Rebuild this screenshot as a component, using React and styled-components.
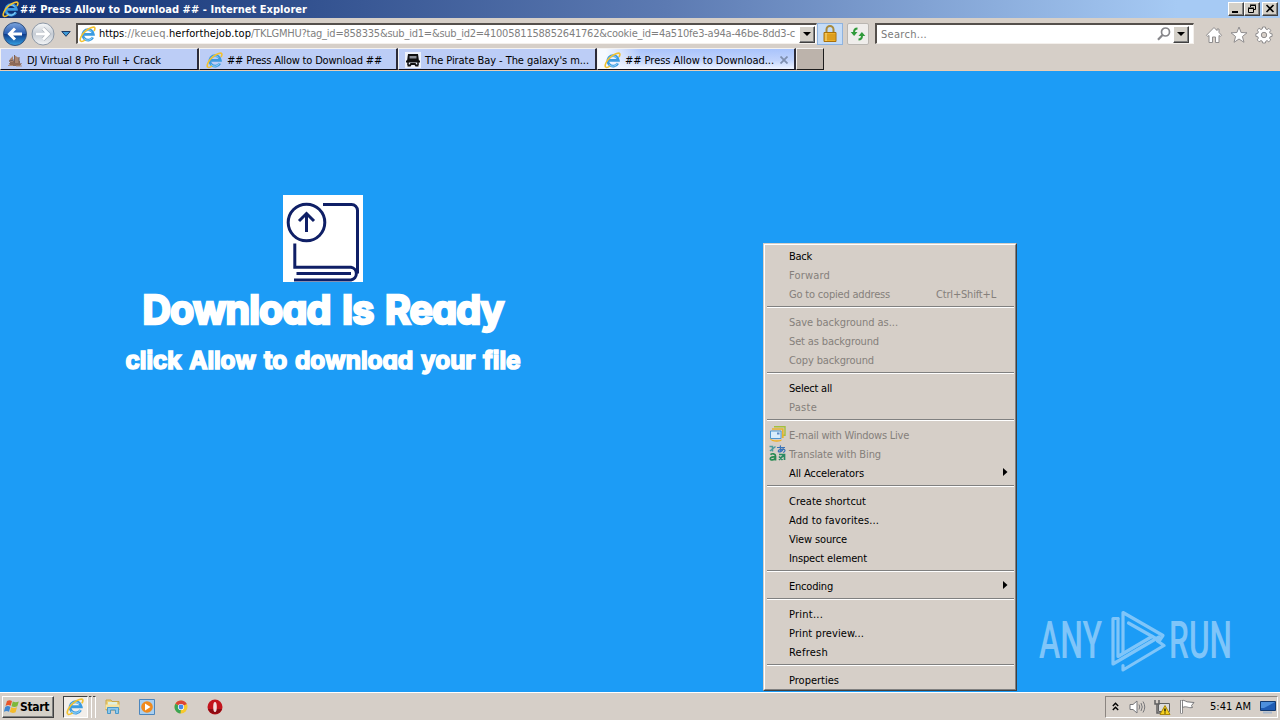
import React, { useLayoutEffect, useRef, useState } from "react";
import styled, { createGlobalStyle, css } from "styled-components";

const GlobalStyle = createGlobalStyle`
  *,
  *::before {
    box-sizing: border-box;
  }

  body {
    margin: 0;
    overflow: hidden;
    font-family: "DejaVu Sans Condensed", "DejaVu Sans", sans-serif;
    font-stretch: condensed;
    font-size: 11px;
    color: #000;
  }

  svg {
    display: block;
    flex-shrink: 0;
  }
`;

const raised = css`
  border: 1px solid;
  border-color: #fff #404040 #404040 #fff;
  box-shadow: inset -1px -1px 0 #808080;
  background: #d4d0c8;
`;

const Screen = styled.div`
  position: relative;
  display: flex;
  flex-direction: column;
  width: 1280px;
  height: 720px;
  overflow: hidden;
  background: #d6cfc8;
`;

/* ---------- text ---------- */

const TextBox = styled.span`
  display: block;
  flex-shrink: 0;
  white-space: pre;
  text-align: left;
`;

const TextRun = styled.span`
  display: inline-block;
  transform-origin: 0 50%;
`;

// Spreads (or squeezes) a label so that it takes exactly the given width
const FitText = ({ width, squeeze = false, className, children }) => {
  const ref = useRef(null);
  const [fit, setFit] = useState({});

  useLayoutEffect(() => {
    const natural = ref.current.getBoundingClientRect().width;
    if (squeeze) {
      setFit({ transform: `scaleX(${width / natural})` });
    } else {
      const count = ref.current.textContent.length;
      setFit({ letterSpacing: (width - natural) / count });
    }
  }, []);

  return (
    <TextBox className={className} style={{ width }}>
      <TextRun ref={ref} style={fit}>
        {children}
      </TextRun>
    </TextBox>
  );
};

/* ---------- icons ---------- */

const IeIcon = ({ size = 17 }) => (
  <svg width={size} height={size} viewBox="0 0 17 17" fill="none">
    <path
      d="M13.8 11.4a5.3 5.3 0 1 1 .6-3.1H5.2"
      stroke="#3b9be0"
      strokeWidth="2.700"
    />
    <path d="M13.4 10.9a4.9 4.9 0 0 1-8.500 1.500M4.500 6.500a5 5 0 0 1 8-1" stroke="#8fd2f8" strokeWidth="1" />
    <path
      d="M1.6 15.2C.2 13.400 2.700 8 7 4.600 11 1.300 15.200.400 15.800 1.800c.400 1-.200 2.200-.900 3.200"
      stroke="#f2c230"
      strokeWidth="1.6"
    />
    <path d="M1.600 15.200c1 .800 3-.100 4.600-1.200" stroke="#f2c230" strokeWidth="1.500" />
  </svg>
);

const ShipIcon = () => (
  <svg width="16" height="16" viewBox="0 0 16 16">
    <path d="M2 11l1 3h10l2-3-2 .500V9H3v2z" fill="#8d6a58" />
    <path d="M3 7l3-3v6H2zM7 3l5 3v5H7z" fill="#a98672" />
    <path d="M7.500 3v8M12 5v6M2 9l5-1" stroke="#77605a" />
    <path d="M1 13.500h5M9 14h6" stroke="#b0907c" />
  </svg>
);

const CassetteIcon = () => (
  <svg width="16" height="16" viewBox="0 0 16 16">
    <path d="M0 0h16v16H0z" fill="#eef2fb" />
    <path d="M3 2h10l1 7H2z" fill="#111" />
    <path d="M4.500 4h7v2.500h-7z" fill="#8b8f96" />
    <path d="M1 9.500h14M2.500 13.500h2.500l1-1.500h4l1 1.500h2.500" stroke="#111" strokeWidth="1.800" fill="none" />
    <path d="M3 10v3M13 10v3" stroke="#111" strokeWidth="1.500" />
  </svg>
);

const BackIcon = () => (
  <svg width="26" height="26" viewBox="0 0 26 26">
    <defs>
      <linearGradient id="back" x2="0" y2="1">
        <stop offset="0" stopColor="#7da5dd" />
        <stop offset=".48" stopColor="#2b5fb4" />
        <stop offset=".52" stopColor="#0e3d8d" />
        <stop offset="1" stopColor="#35a2e4" />
      </linearGradient>
    </defs>
    <circle cx="13" cy="13" r="11.500" fill="url(#back)" stroke="#34527f" />
    <path
      d="M20 13H8M13 7.500L7.500 13l5.500 5.500"
      stroke="#fff"
      strokeWidth="3"
      fill="none"
    />
  </svg>
);

const ForwardIcon = () => (
  <svg width="26" height="26" viewBox="0 0 26 26">
    <defs>
      <linearGradient id="forward" x2="0" y2="1">
        <stop offset="0" stopColor="#f8fafb" />
        <stop offset=".5" stopColor="#c6ccd4" />
        <stop offset="1" stopColor="#f4f6f8" />
      </linearGradient>
    </defs>
    <circle cx="13" cy="13" r="11" fill="url(#forward)" stroke="#8d98a6" />
    <path
      d="M6 13h12M13 7.500l5.500 5.500-5.500 5.500"
      stroke="#aab1ba"
      strokeWidth="4"
      fill="none"
    />
    <path
      d="M6 13h12M13 7.500l5.500 5.500-5.500 5.500"
      stroke="#fff"
      strokeWidth="2.800"
      fill="none"
    />
  </svg>
);

const HistoryArrow = () => (
  <svg width="10" height="6" viewBox="0 0 10 6">
    <path d="M.8.500h8.400L5 5.300z" fill="#3d9ad8" stroke="#1d3b66" />
  </svg>
);

const DownArrow = () => (
  <svg width="8" height="4" viewBox="0 0 8 4">
    <path d="M0 0h8L4 4z" fill="#000" />
  </svg>
);

const LockIcon = () => (
  <svg width="14" height="17" viewBox="0 0 14 17">
    <path d="M3.500 8V4.500a3.500 3.500 0 0 1 7 0V8" fill="none" stroke="#a88a3c" strokeWidth="2" />
    <path d="M1 7.500h12v9H1z" fill="#eeb028" stroke="#a8700c" />
    <path d="M1.500 10h11M1.500 12h11M1.500 14h11" stroke="#c4860f" strokeWidth=".8" />
    <path d="M3 8v8" stroke="#fbe08a" />
  </svg>
);

const RefreshIcon = () => (
  <svg width="16" height="14" viewBox="0 0 16 14">
    <path d="M7.500 1.500C5 1.500 4 3 4 5.500" fill="none" stroke="#2f9a3a" strokeWidth="2" />
    <path d="M.7 5h6.800L4.100 9z" fill="#2f9a3a" />
    <path d="M8.500 12.500c2.500 0 3.500-1.500 3.500-4" fill="none" stroke="#2f9a3a" strokeWidth="2" />
    <path d="M8.500 9h6.800L11.900 5z" fill="#2f9a3a" />
  </svg>
);

const SearchIcon = () => (
  <svg width="14" height="14" viewBox="0 0 14 14">
    <circle cx="8.500" cy="5" r="4" fill="none" stroke="#86868a" strokeWidth="1.700" />
    <path d="M5.500 8L1 12.700" stroke="#86868a" strokeWidth="2.200" />
  </svg>
);

const HomeIcon = () => (
  <svg width="18" height="18" viewBox="0 0 18 18">
    <path
      d="M9 1.500L1.500 9.200l1 1.200L4 9.500v7h3.500V11h3v5.500H14v-7l1.500.900 1-1.200-2.500-2.700V3h-2v1.600z"
      fill="#fff"
      stroke="#8f8d8e"
    />
  </svg>
);

const StarIcon = () => (
  <svg width="18" height="18" viewBox="0 0 18 18">
    <path
      d="M9 1l2.100 5.500 5.900.300-4.600 3.700 1.600 5.800L9 13l-5 3.300 1.600-5.800L1 6.800l5.900-.300z"
      fill="#fff"
      stroke="#8f8d8e"
    />
  </svg>
);

const GearIcon = () => (
  <svg width="18" height="18" viewBox="0 0 18 18">
    <path
      d="M7.600 1h2.800l.4 2 1.300.600 1.800-1.200 1.900 1.900-1.200 1.800.600 1.400 1.900.300v2.600l-2 .400-.500 1.400 1.200 1.700-2 1.900-1.700-1.200-1.300.600-.4 1.800H7.600l-.4-1.900-1.300-.500-1.800 1.200-1.900-1.900 1.200-1.800L2.800 10.700.9 10.400V7.700l1.900-.4.600-1.400L2.200 4.200l1.900-1.900 1.800 1.200L7.200 3z"
      fill="#fff"
      stroke="#8f8d8e"
    />
    <circle cx="9" cy="9" r="2.700" fill="#d6cfc8" stroke="#8f8d8e" />
  </svg>
);

const BookIcon = () => (
  <svg width="80" height="87" viewBox="0 0 80 87" fill="none" stroke="#0f1f66" strokeWidth="3">
    <path d="M0 0h80v87H0z" fill="#fff" stroke="none" />
    <circle cx="23.500" cy="27.500" r="18.300" />
    <path d="M23.500 37V18.500M16 26l7.500-7.500 7.500 7.500" />
    <path d="M40 9.500h28.500a6 6 0 0 1 6 6v63" />
    <path d="M11.800 48.500v23.700H68a6.500 6.500 0 0 1 0 12.800H11" />
    <path d="M13.500 78.500H68" />
  </svg>
);

const MailIcon = () => (
  <svg width="17" height="16" viewBox="0 0 17 16">
    <path d="M5 .800h11v8.500H14" fill="none" stroke="#a4bf3b" strokeWidth="1.400" />
    <path d="M3 3h10.800v9" fill="none" stroke="#e6b32e" strokeWidth="1.700" />
    <path d="M1.500 5h10.500v7.500h-10.500z" fill="#d9ecfb" stroke="#4f95cf" />
    <path d="M8 6.500h2.500v2H8z" fill="#5b8ac4" />
    <path d="M.5 12c2 2.500 8 3 12.500 1.500l-1 1.500C8 16.500 2 16 .5 12z" fill="#f0b020" />
  </svg>
);

const TranslateIcon = () => (
  <svg width="17" height="16" viewBox="0 0 17 16" fill="none">
    <path d="M8 2.500h8M11.500.300c-.5 3 .1 4.500.5 6.500M14.500 3.200c-1 3-3.500 4.300-5 3.500-1-1.800 3-3 5-2.500 2.500.700 1.500 2.800-.5 3.300" stroke="#3b74b8" strokeWidth="1.200" />
    <path d="M.500 1.500h3v5M1 6l5.500-4.500" stroke="#4c9b9d" strokeWidth="1.500" />
    <path d="M1.500 9.700c1.500-1.500 5-1.200 5 1.200v4.500M6.300 12c-2.300-.4-5 0-5 1.800 0 1.700 3.700 1.600 5-.6" stroke="#278a52" strokeWidth="1.700" />
    <path d="M10 9.500h5.500V15M10 14.800l5-5M10 11.500l3.500 3.500" stroke="#2b8a63" strokeWidth="1.700" />
  </svg>
);

const Submark = () => (
  <svg width="5" height="8" viewBox="0 0 5 8">
    <path d="M0 0l4.500 4L0 8z" fill="#000" />
  </svg>
);

const PlayMark = () => (
  <svg width="56" height="64" viewBox="0 0 56 64" fill="none" stroke="#a0d3fb" strokeWidth="3.200" strokeLinejoin="round" strokeLinecap="round">
    <path d="M13 43.500V3.500L53 26.500l-3.500 5-31-17.500" />
    <path d="M8 9.500H3V55l46-27" />
    <path d="M8 9.500v38L42 27.500" />
    <path d="M13 56.500v4.500L54 36.500 47.500 32" />
  </svg>
);

const WindowsFlag = () => (
  <svg width="16" height="15" viewBox="0 0 16 15">
    <path d="M3 2c2-1.300 3.500-1 5 0L6.700 6.800C5 5.800 3.500 5.700 1.500 6.900z" fill="#e8562a" />
    <path d="M8.800 2.400c2 1 3.700 1 6 0l-1.500 4.900c-2 1-4 .900-5.800-.1z" fill="#7db83a" />
    <path d="M1.200 7.900c2-1.300 3.600-1 5.200 0L5 12.800c-1.700-1-3.300-1-5.200.1z" fill="#3f87d2" />
    <path d="M7.200 8.300c2 1 3.700 1 5.800 0l-1.400 4.900c-2 1-4 .900-5.800-.1z" fill="#f4bb2c" />
  </svg>
);

const FolderIcon = () => (
  <svg width="18" height="17" viewBox="0 0 18 17">
    <path d="M2 2h5l1 1.500h7V12H2z" fill="#ecd078" stroke="#c9a748" />
    <path d="M4 4h9v5H4z" fill="#dff0e0" />
    <path d="M1.500 6.500h14V11h-14z" fill="#f6e3a1" />
    <path d="M3.500 15.500V9.500h11v6h-3V12h-5v3.500z" fill="#8cc8ec" stroke="#4a98c8" />
  </svg>
);

const MediaIcon = () => (
  <svg width="16" height="16" viewBox="0 0 16 16">
    <path d="M.5.500h15v15H.5z" fill="#a9cff0" stroke="#4c86bd" />
    <circle cx="8" cy="8" r="5.800" fill="#f08a1d" />
    <path d="M6 4.500v7L11.500 8z" fill="#fff" />
  </svg>
);

const ChromeIcon = () => (
  <svg width="14" height="14" viewBox="0 0 14 14">
    <circle cx="7" cy="7" r="6.500" fill="#f7c92d" />
    <path d="M7 7L1.400 3.700A6.500 6.500 0 0 1 12.800 4z" fill="#dc4436" />
    <path d="M7 7L1.400 3.700A6.500 6.500 0 0 0 6.500 13.500z" fill="#3ba455" />
    <circle cx="7" cy="7" r="3.100" fill="#fff" />
    <circle cx="7" cy="7" r="2.400" fill="#4688e8" />
  </svg>
);

const OperaIcon = () => (
  <svg width="16" height="16" viewBox="0 0 16 16">
    <circle cx="8" cy="8" r="7.500" fill="#c3141c" />
    <path d="M1 10a7.500 7.500 0 0 0 14 0z" fill="#8c0b12" />
    <ellipse cx="8" cy="8" rx="1.800" ry="5" fill="#f4dede" />
  </svg>
);

const ChevronsIcon = () => (
  <svg width="7" height="9" viewBox="0 0 7 9" fill="none" stroke="#000" strokeWidth="1.400">
    <path d="M.8 4l2.700-2.700L6.200 4M.8 8l2.700-2.700L6.200 8" />
  </svg>
);

const SpeakerIcon = () => (
  <svg width="17" height="14" viewBox="0 0 17 14" fill="none" stroke="#77777a">
    <path d="M1 4.500h3L8 1v12L4 9.500H1z" fill="#fff" />
    <path d="M10 4.500q1.500 2.500 0 5M12 3q2.500 4 0 8M14 1.500q3.500 5.500 0 11" />
  </svg>
);

const NetworkIcon = () => (
  <svg width="17" height="16" viewBox="0 0 17 16">
    <path d="M4.500 4.500h11v8h-11z" fill="#dcdcdc" stroke="#606060" />
    <path d="M1 1v4h4V1M3 5v9h4" fill="none" stroke="#606060" strokeWidth="1.500" />
    <path d="M11 6.500l5 9H6z" fill="#f7d21e" stroke="#a8860b" />
    <path d="M11 9.500v3M11 13.500v1" stroke="#000" strokeWidth="1.300" />
  </svg>
);

const FlagIcon = () => (
  <svg width="17" height="15" viewBox="0 0 17 15">
    <path d="M2.500 1.500C6 .500 7 3.500 10 3l5 .5-2.500 3 1 2C9 9.500 8 6.500 3.500 8.500z" fill="#fff" stroke="#77777a" />
    <path d="M2.500 1v13.500" stroke="#77777a" strokeWidth="2.600" />
    <path d="M2.500 1.500v12.500" stroke="#fff" strokeWidth="1" />
  </svg>
);

const MonitorIcon = () => (
  <svg width="16" height="14" viewBox="0 0 16 14">
    <path d="M.5 1.500h15v9H.5z" fill="#1f5cb4" stroke="#12396f" />
    <path d="M1 2h14L4 8H1z" fill="#4d8fdc" />
    <path d="M3 12.500h9" stroke="#a9b8cc" strokeWidth="2" />
  </svg>
);

/* ---------- title bar ---------- */

const TitleBar = styled.div`
  display: flex;
  align-items: center;
  height: 18px;
  flex-shrink: 0;
  padding: 0 2px;
  background: linear-gradient(90deg, #0f2f72, #5c7ab2 52%, #a6caf4 92%);
`;

const TitleText = styled(FitText)`
  margin-left: 1px;
  padding-top: 1px;
  color: #fff;
  font-weight: bold;
  line-height: 17px;
`;

const WindowButtons = styled.div`
  display: flex;
  margin-left: auto;
`;

const WindowButton = styled.div`
  ${raised}
  width: 16px;
  height: 14px;
  margin-left: ${(props) => (props.$apart ? 2 : 0)}px;
`;

/* ---------- address row ---------- */

const AddressRow = styled.div`
  display: flex;
  align-items: center;
  height: 30px;
  flex-shrink: 0;
  padding: 1px 7px 0 2px;
`;

const NavButtons = styled.div`
  display: flex;
  align-items: center;
  width: 74px;
  flex-shrink: 0;

  svg:nth-child(2) {
    margin-left: 2px;
  }

  svg:nth-child(3) {
    margin-left: 5px;
  }
`;

const Field = styled.div`
  display: flex;
  align-items: center;
  width: ${(props) => props.$width}px;
  height: 21px;
  flex-shrink: 0;
  padding: 0 ${(props) => props.$end}px 0 1px;
  border: 1px solid;
  border-width: 2px 1px 1px 2px;
  border-color: #55504c #f4f0ec #f4f0ec #55504c;
  background: #fff;
`;

const AddressText = styled.div`
  display: flex;
  margin-left: 3px;
  line-height: 16px;
`;

const GreyText = styled(FitText)`
  color: #7f7f7f;
`;

const DropButton = styled.div`
  ${raised}
  display: flex;
  align-items: center;
  justify-content: center;
  width: 16px;
  height: 17px;
  margin-left: auto;
`;

const AddressButton = styled.div`
  display: flex;
  align-items: center;
  justify-content: center;
  height: 22px;
  flex-shrink: 0;
  border: 1px solid;
`;

const LockButton = styled(AddressButton)`
  width: 26px;
  border-color: #8fb3df;
  background: #c5dcf7;
`;

const RefreshButton = styled(AddressButton)`
  width: 22px;
  margin: 0 6px 0 4px;
  border-color: #bab6b1;
  border-radius: 2px;
  background: #efedeb;
`;

const SearchPlaceholder = styled(FitText)`
  margin-left: 3px;
  line-height: 16px;
  padding-top: 1px;
  color: #7a7a7a;
`;

const SearchActions = styled.div`
  display: flex;
  align-items: center;
  gap: 2px;
  margin-left: auto;
`;

const ToolIcons = styled.div`
  display: flex;
  gap: 7px;
  margin-left: auto;
  padding-top: 2px;
`;

/* ---------- tabs ---------- */

const TabRow = styled.div`
  display: flex;
  height: 23px;
  flex-shrink: 0;
  border-bottom: 1px solid #e8cdb4;
`;

const Tab = styled.div`
  display: flex;
  align-items: center;
  width: 199px;
  height: 22px;
  padding: 2px 6px 0 6px;
  border: 1px solid;
  border-width: 1px 2px 1px 1px;
  border-color: #f4f2f0 #2b2b38 #0e0e1a #f4f2f0;
  background: ${(props) =>
    props.$active
      ? "linear-gradient(90deg, #f6f9ff 4%, transparent 22%), linear-gradient(#a9c3fb, #c0d3fc 55%, #eef3ff)"
      : "#bccdf6"};
`;

const TabTitle = styled(FitText)`
  margin-left: 4px;
  padding-top: 1px;
  line-height: 18px;
`;

const CloseMark = styled.svg`
  margin-left: auto;
`;

const NewTab = styled.div`
  width: 28px;
  height: 22px;
  border: 1px solid;
  border-width: 1px 1px 1px 1px;
  border-color: #f4f2f0 #1c1c1c #1c1c1c #f4f2f0;
  background: #bcb3ab;
`;

/* ---------- page ---------- */

const Page = styled.div`
  flex: 1;
  background: #1c9cf6;
`;

const Hero = styled.div`
  display: flex;
  flex-direction: column;
  align-items: center;
  width: 646px;
  padding-top: 124px;
`;

const Heading = styled(FitText)`
  color: #fff;
  font-family: Inter, "Open Sans", sans-serif;
  font-feature-settings: "cv11", "ss07";
  font-stretch: normal;
  font-weight: 700;
  font-size: ${(props) => props.$size}px;
  line-height: ${(props) => props.$line}px;
  word-spacing: 0.08em;
  -webkit-text-stroke: ${(props) => props.$stroke}px #fff;
  stroke-linejoin: round;
`;

/* ---------- context menu ---------- */

const Menu = styled.div`
  position: absolute;
  left: 763px;
  top: 243px;
  width: 254px;
  height: 448px;
  border: 1px solid;
  border-color: #d6cfc8 #404040 #404040 #d6cfc8;
  background: #d6cfc8;
`;

const MenuInner = styled.div`
  height: 100%;
  padding: 1px 0;
  border: 1px solid;
  border-color: #fff #808080 #808080 #fff;
`;

const MenuItem = styled.div`
  display: flex;
  align-items: center;
  height: 19px;
  padding: 1px 7px 0 0;
  color: ${(props) => (props.$disabled ? "#85807b" : "#000")};
`;

const MenuIcon = styled.div`
  width: 24px;
  padding-left: 4px;
  margin-top: -2px;
`;

const Shortcut = styled(FitText)`
  margin-left: auto;
  margin-right: 12px;
`;

const Arrow = styled.div`
  margin-left: auto;
  margin-top: -3px;
`;

const Separator = styled.div`
  height: 9px;
  padding: 3px 1px 0 2px;

  &::before {
    content: "";
    display: block;
    height: 2px;
    border-top: 1px solid #808080;
    border-bottom: 1px solid #fff;
  }
`;

/* ---------- watermark ---------- */

const Watermark = styled.div`
  position: absolute;
  left: 1039px;
  top: 609px;
  display: flex;
  align-items: center;
  opacity: 0.75;
`;

const WatermarkText = styled(FitText)`
  color: #a0d3fb;
  font-family: Roboto, sans-serif;
  font-stretch: normal;
  font-weight: 500;
  font-size: 51px;
  line-height: 64px;

  &:first-child {
    margin-right: 8px;
  }

  &:last-child {
    margin-left: 3px;
  }
`;

/* ---------- taskbar ---------- */

const Taskbar = styled.div`
  display: flex;
  align-items: center;
  height: 28px;
  flex-shrink: 0;
  padding: 0 2px;
  border-top: 1px solid #fff;
  background: #d6cfc8;
`;

const StartButton = styled.div`
  ${raised}
  display: flex;
  align-items: center;
  width: 52px;
  height: 22px;
  padding-left: 1px;
`;

const StartText = styled(FitText)`
  font-weight: bold;
  font-size: 12px;
`;

const TaskButtons = styled.div`
  display: flex;
  align-items: center;
  margin-left: 9px;
`;

const PressedTask = styled.div`
  display: flex;
  width: 25px;
  height: 22px;
  padding: 1px 0 0 2px;
  border: 1px solid;
  border-color: #404040 #fff #fff #404040;
  background: #f2eeea;
`;

const StackEdge = styled.div`
  width: 3px;
  height: 22px;
  border-top: 1px solid #404040;
  border-right: 1px solid #fff;
  margin-left: 1px;
  background: #d6cfc8;
`;

const QuickIcon = styled.div`
  display: flex;
  justify-content: center;
  width: 34px;
`;

const Tray = styled.div`
  display: flex;
  align-items: center;
  width: 173px;
  height: 22px;
  margin-left: auto;
  padding: 0 1px 0 6px;
  border: 1px solid;
  border-color: #8b8580 #fff #fff #8b8580;
`;

const TrayIcons = styled.div`
  display: flex;
  align-items: center;
  gap: 8px;

  svg:nth-child(2) {
    margin-left: 2px;
  }
`;

const Clock = styled(FitText)`
  margin-left: 14px;
  margin-right: auto;
`;

const tabs = [
  { title: "DJ Virtual 8 Pro Full + Crack", width: 134, icon: <ShipIcon /> },
  { title: "## Press Allow to Download ##", width: 155, icon: <IeIcon /> },
  { title: "The Pirate Bay - The galaxy's m...", width: 164, icon: <CassetteIcon /> },
  { title: "## Press Allow to Download...", width: 149, icon: <IeIcon />, active: true },
];

const menuGroups = [
  [
    { label: "Back", width: 23 },
    { label: "Forward", width: 41, disabled: true },
    { label: "Go to copied address", width: 101, disabled: true, shortcut: "Ctrl+Shift+L" },
  ],
  [
    { label: "Save background as...", width: 109, disabled: true },
    { label: "Set as background", width: 90, disabled: true },
    { label: "Copy background", width: 85, disabled: true },
  ],
  [
    { label: "Select all", width: 43 },
    { label: "Paste", width: 28, disabled: true },
  ],
  [
    { label: "E-mail with Windows Live", width: 120, disabled: true, icon: <MailIcon /> },
    { label: "Translate with Bing", width: 92, disabled: true, icon: <TranslateIcon /> },
    { label: "All Accelerators", width: 75, submenu: true },
  ],
  [
    { label: "Create shortcut", width: 77 },
    { label: "Add to favorites...", width: 90 },
    { label: "View source", width: 58 },
    { label: "Inspect element", width: 78 },
  ],
  [{ label: "Encoding", width: 44, submenu: true }],
  [
    { label: "Print...", width: 34 },
    { label: "Print preview...", width: 75 },
    { label: "Refresh", width: 39 },
  ],
  [{ label: "Properties", width: 50 }],
];

const ContextMenu = () => (
  <Menu>
    <MenuInner>
      {menuGroups.map((group, i) => (
        <React.Fragment key={i}>
          {i > 0 && <Separator />}
          {group.map((item) => (
            <MenuItem key={item.label} $disabled={item.disabled}>
              <MenuIcon>{item.icon}</MenuIcon>
              <FitText width={item.width}>{item.label}</FitText>
              {item.shortcut && <Shortcut width={60}>{item.shortcut}</Shortcut>}
              {item.submenu && (
                <Arrow>
                  <Submark />
                </Arrow>
              )}
            </MenuItem>
          ))}
        </React.Fragment>
      ))}
    </MenuInner>
  </Menu>
);

const App = () => (
  <Screen>
    <GlobalStyle />
    <TitleBar>
      <IeIcon />
      <TitleText width={287}>
        ## Press Allow to Download ## - Internet Explorer
      </TitleText>
      <WindowButtons>
        <WindowButton>
          <svg width="14" height="12">
            <path d="M3 9h6" stroke="#000" strokeWidth="2" />
          </svg>
        </WindowButton>
        <WindowButton>
          <svg width="14" height="12" fill="none" stroke="#000">
            <path d="M5.500 4V2.500h5v4H9M5 2h6M3.500 5.500h5v4h-5zM3 5h6" />
          </svg>
        </WindowButton>
        <WindowButton $apart>
          <svg width="14" height="12">
            <path d="M3.500 2l7 7M10.500 2l-7 7" stroke="#000" strokeWidth="1.600" />
          </svg>
        </WindowButton>
      </WindowButtons>
    </TitleBar>

    <AddressRow>
      <NavButtons>
        <BackIcon />
        <ForwardIcon />
        <HistoryArrow />
      </NavButtons>
      <Field $width={741} $end={1}>
        <IeIcon />
        <AddressText>
          <FitText width={25}>https</FitText>
          <GreyText width={45}>://keueq.</GreyText>
          <FitText width={82}>herforthejob.top</FitText>
          <GreyText width={544}>
            /TKLGMHU?tag_id=858335&amp;sub_id1=&amp;sub_id2=4100581158852641762&amp;cookie_id=4a510fe3-a94a-46be-8dd3-c
          </GreyText>
        </AddressText>
        <DropButton>
          <DownArrow />
        </DropButton>
      </Field>
      <LockButton>
        <LockIcon />
      </LockButton>
      <RefreshButton>
        <RefreshIcon />
      </RefreshButton>
      <Field $width={319} $end={4}>
        <SearchPlaceholder width={46}>Search...</SearchPlaceholder>
        <SearchActions>
          <SearchIcon />
          <DropButton>
            <DownArrow />
          </DropButton>
        </SearchActions>
      </Field>
      <ToolIcons>
        <HomeIcon />
        <StarIcon />
        <GearIcon />
      </ToolIcons>
    </AddressRow>

    <TabRow>
      {tabs.map((tab, i) => (
        <Tab key={i} $active={tab.active}>
          {tab.icon}
          <TabTitle width={tab.width}>{tab.title}</TabTitle>
          {tab.active && (
            <CloseMark width="8" height="8" viewBox="0 0 8 8">
              <path d="M.5.500l7 7M7.500.500l-7 7" stroke="#7f8fae" strokeWidth="1.800" />
            </CloseMark>
          )}
        </Tab>
      ))}
      <NewTab />
    </TabRow>

    <Page>
      <Hero>
        <BookIcon />
        <Heading width={361} $size={39.5} $line={57} $stroke={2.4}>
          Download Is Ready
        </Heading>
        <Heading width={395} $size={24.5} $line={42} $stroke={1.5}>
          click Allow to download your file
        </Heading>
      </Hero>
    </Page>

    <Taskbar>
      <StartButton>
        <WindowsFlag />
        <StartText width={29}>Start</StartText>
      </StartButton>
      <TaskButtons>
        <PressedTask>
          <IeIcon size={18} />
        </PressedTask>
        <StackEdge />
        <StackEdge />
        <QuickIcon>
          <FolderIcon />
        </QuickIcon>
        <QuickIcon>
          <MediaIcon />
        </QuickIcon>
        <QuickIcon>
          <ChromeIcon />
        </QuickIcon>
        <QuickIcon>
          <OperaIcon />
        </QuickIcon>
      </TaskButtons>
      <Tray>
        <TrayIcons>
          <ChevronsIcon />
          <SpeakerIcon />
          <NetworkIcon />
          <FlagIcon />
        </TrayIcons>
        <Clock width={41}>5:41 AM</Clock>
        <MonitorIcon />
      </Tray>
    </Taskbar>

    <Watermark>
      <WatermarkText width={63} squeeze>
        ANY
      </WatermarkText>
      <PlayMark />
      <WatermarkText width={63} squeeze>
        RUN
      </WatermarkText>
    </Watermark>
    <ContextMenu />
  </Screen>
);

export default App;
